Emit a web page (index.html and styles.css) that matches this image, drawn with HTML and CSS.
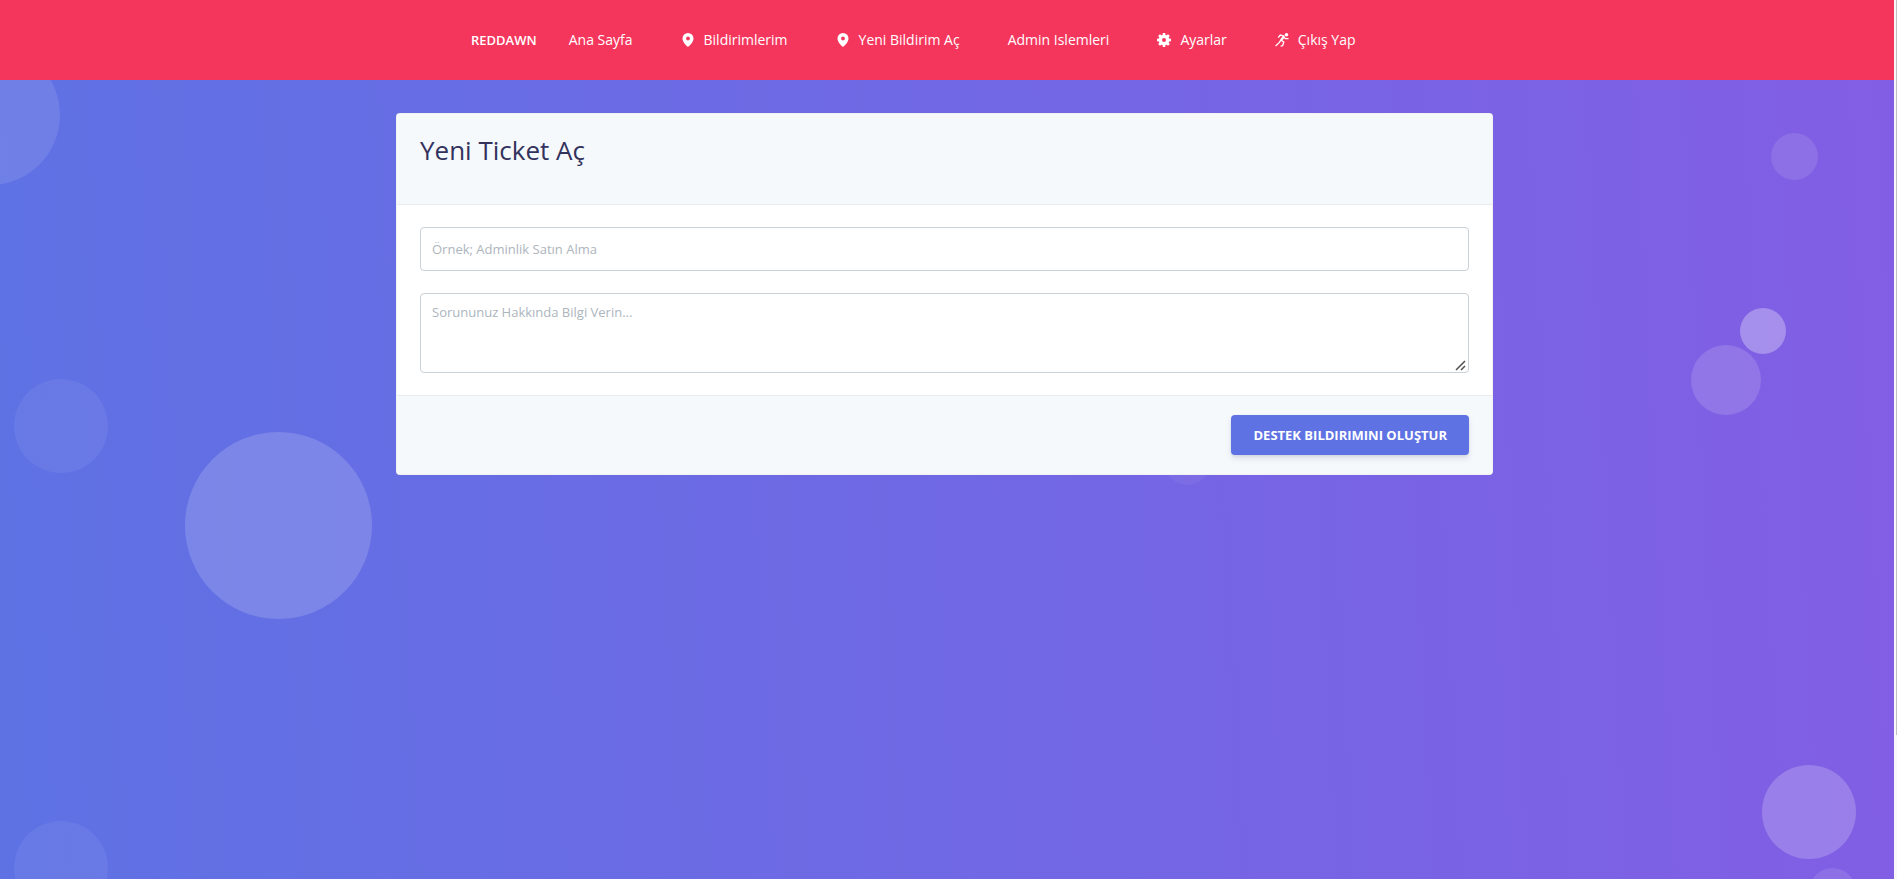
FILE: index.html
```html
<!DOCTYPE html>
<html lang="tr">
<head>
<meta charset="utf-8">
<title>Yeni Ticket Aç</title>
<link rel="stylesheet" href="styles.css">
</head>
<body>
<div class="page">
  <header class="topbar">
    <nav class="nav">
      <a class="brand" href="#">REDDAWN</a>
      <ul class="menu">
        <li><a href="#">Ana Sayfa</a></li>
        <li><a href="#"><svg class="icon" viewBox="0 0 14 14" aria-hidden="true"><path fill-rule="evenodd" d="M7 0a5.500 5.500 0 0 1 5.500 5.500C12.500 9 9 12.300 7 14 5 12.300 1.500 9 1.500 5.500A5.500 5.500 0 0 1 7 0Zm0 3.600a1.900 1.900 0 1 0 0 3.800 1.900 1.900 0 0 0 0-3.800Z"/></svg>Bildirimlerim</a></li>
        <li><a href="#"><svg class="icon" viewBox="0 0 14 14" aria-hidden="true"><path fill-rule="evenodd" d="M7 0a5.500 5.500 0 0 1 5.500 5.500C12.500 9 9 12.300 7 14 5 12.300 1.500 9 1.500 5.500A5.500 5.500 0 0 1 7 0Zm0 3.600a1.900 1.900 0 1 0 0 3.800 1.900 1.900 0 0 0 0-3.800Z"/></svg>Yeni Bildirim Aç</a></li>
        <li><a href="#">Admin Islemleri</a></li>
        <li><a href="#"><svg class="icon" viewBox="0 0 14 14" aria-hidden="true"><path fill-rule="evenodd" d="M5.800 0h2.400l.3 1.900 1 .4 1.600-1.100 1.700 1.700-1.100 1.600.4 1 1.900.3v2.400l-1.900.3-.4 1 1.100 1.600-1.700 1.700-1.600-1.100-1 .4-.3 1.900H5.800l-.3-1.900-1-.4-1.600 1.100-1.700-1.700 1.100-1.600-.4-1L0 8.200V5.800l1.900-.3.4-1-1.100-1.600 1.700-1.700 1.600 1.100 1-.4ZM7 5a2 2 0 1 0 0 4 2 2 0 0 0 0-4Z"/></svg>Ayarlar</a></li>
        <li><a href="#"><svg class="icon" viewBox="0 0 14 14" aria-hidden="true"><circle cx="11.500" cy="1.800" r="1.800"/><path class="limb" d="M3.200 4.600 5.300 2l3.200.8-2.800 4.200L8.800 9 7.600 12.600 5.600 13.100M5.500 7.600 4.400 9.400.6 12.900M8.500 2.800 10.200 5.700H13.600M8.800 4.300 6.900 7.200"/></svg>Çıkış Yap</a></li>
      </ul>
    </nav>
  </header>
  <main class="hero">
    <div class="shapes" aria-hidden="true">
      <span class="s1"></span><span class="s2"></span><span class="s3"></span><span class="s4"></span><span class="s5"></span>
      <span class="s6"></span><span class="s7"></span><span class="s8"></span><span class="s9"></span><span class="s10"></span>
    </div>
    <form class="card">
      <div class="card-header"><h1>Yeni Ticket Aç</h1></div>
      <div class="card-body">
        <input class="field" type="text" aria-label="Konu" placeholder="Örnek; Adminlik Satın Alma">
        <textarea class="field area" aria-label="Mesaj" placeholder="Sorununuz Hakkında Bilgi Verin..."></textarea>
      </div>
      <div class="card-footer"><button class="submit" type="button">DESTEK BILDIRIMINI OLUŞTUR</button></div>
    </form>
  </main>
</div>
<div class="track"><div class="thumb"></div></div>
</body>
</html>
```
FILE: styles.css
```css
* {
  box-sizing: border-box;
}

body {
  margin: 0;
  display: flex;
  min-height: 100vh;
  font-family: "Open Sans", "Noto Sans", sans-serif;
  font-size: 14px;
  line-height: 20px;
}

.page {
  flex: 1;
  min-width: 0;
  display: flex;
  flex-direction: column;
}

.track {
  width: 3px;
  padding-left: 2px;
  background: #f8f8f8;
}

.thumb {
  height: 735px;
  max-height: 84vh;
  background: #c1c1c1;
}

.topbar {
  background: #f5365c;
  padding: 30px 0;
}

.nav {
  width: 100%;
  max-width: 952px;
  margin: 0 auto;
  display: flex;
  align-items: center;
  gap: 32px;
}

.nav a {
  color: #fff;
  text-decoration: none;
  white-space: nowrap;
}

.nav .brand {
  font-size: 13px;
  font-weight: 600;
}

.menu {
  display: flex;
  gap: 48px;
  margin: 0;
  padding: 0;
  list-style: none;
}

.menu a {
  display: flex;
  align-items: center;
  gap: 9px;
}

.icon {
  width: 14px;
  height: 14px;
  fill: #fff;
}

.limb {
  fill: none;
  stroke: #fff;
  stroke-width: 1.3;
}

.hero {
  flex: 1;
  position: relative;
  overflow: hidden;
  padding: 33px 5px 33px 0;
  background: linear-gradient(87deg, #5e72e4 0, #825ee4 100%);
}

.shapes span {
  position: absolute;
  width: 94px;
  height: 94px;
  border-radius: 50%;
  background: rgba(255, 255, 255, 0.1);
}

.shapes .s1 { left: -80px; top: -35px; width: 140px; height: 140px; }
.shapes .s2 { left: 14px; top: 299px; background: rgba(255, 255, 255, 0.06); }
.shapes .s3 { left: 185px; top: 352px; width: 187px; height: 187px; background: rgba(255, 255, 255, 0.16); }
.shapes .s4 { right: 76px; top: 53px; width: 47px; height: 47px; }
.shapes .s5 { right: 108px; top: 228px; width: 46px; height: 46px; background: rgba(255, 255, 255, 0.3); }
.shapes .s6 { right: 133px; top: 265px; width: 70px; height: 70px; background: rgba(255, 255, 255, 0.14); }
.shapes .s7 { right: 38px; top: 685px; background: rgba(255, 255, 255, 0.2); }
.shapes .s8 { right: 38px; top: 788px; width: 47px; height: 47px; }
.shapes .s9 { left: 14px; top: 741px; background: rgba(255, 255, 255, 0.06); }
.shapes .s10 { right: 683px; top: 358px; width: 47px; height: 47px; background: rgba(255, 255, 255, 0.05); }

.card {
  position: relative;
  max-width: 1097px;
  margin: 0 auto;
  border: 1px solid rgba(0, 0, 0, 0.05);
  border-radius: 4px;
  background: #fff;
}

.card-header {
  padding: 18px 23px 36px;
  border-bottom: 1px solid rgba(0, 0, 0, 0.05);
  border-radius: 3px 3px 0 0;
  background: #f6f9fc;
}

.card-header h1 {
  margin: 0;
  font-size: 26px;
  line-height: 36px;
  font-weight: 400;
  color: #32325d;
}

.card-body {
  display: flex;
  flex-direction: column;
  gap: 22px;
  padding: 22px 23px;
}

.field {
  width: 100%;
  height: 44px;
  padding: 8px 11px;
  border: 1px solid #cad1d7;
  border-radius: 4px;
  background: #fff;
  font-family: inherit;
  font-size: 13px;
  line-height: 20px;
  color: #8898aa;
}

.field::placeholder {
  color: #adb5bd;
}

.area {
  display: block;
  height: 80px;
  resize: vertical;
}

.area::-webkit-resizer {
  background: url("data:image/svg+xml,%3Csvg xmlns='http://www.w3.org/2000/svg' width='15' height='15'%3E%3Cpath d='M3 13 12 4M8 13l4-4' fill='none' stroke='%23505050' stroke-width='1.500'/%3E%3C/svg%3E") no-repeat right bottom;
}

.card-footer {
  display: flex;
  justify-content: flex-end;
  padding: 19px 23px;
  border-top: 1px solid rgba(0, 0, 0, 0.05);
  border-radius: 0 0 3px 3px;
  background: #f6f9fc;
}

.submit {
  padding: 10px 22px;
  border: 0;
  border-radius: 4px;
  background: #5e72e4;
  box-shadow: 0 4px 6px rgba(50, 50, 93, 0.11), 0 1px 3px rgba(0, 0, 0, 0.08);
  font-family: inherit;
  font-size: 13px;
  line-height: 20px;
  font-weight: 700;
  color: #fff;
}
```
